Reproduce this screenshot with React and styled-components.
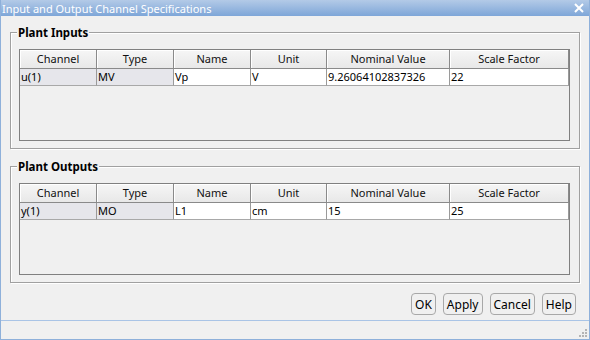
import styled, { createGlobalStyle } from 'styled-components'

const GlobalStyle = createGlobalStyle`
  html, body { margin: 0; padding: 0; background: #f0f0f0; }
  body { font-family: "Noto Sans", "Liberation Sans", sans-serif; font-size: 11px; color: #000; }
`

const columns = ['Channel', 'Type', 'Name', 'Unit', 'Nominal Value', 'Scale Factor']

const groups = [
  { title: 'Plant Inputs', row: ['u(1)', 'MV', 'Vp', 'V', '9.26064102837326', '22'] },
  { title: 'Plant Outputs', row: ['y(1)', 'MO', 'L1', 'cm', '15', '25'] },
]

const buttons = ['OK', 'Apply', 'Cancel', 'Help']

export default function App() {
  return (
    <Window>
      <GlobalStyle />
      <TitleBar>
        <span>Input and Output Channel Specifications</span>
        <svg width="10" height="10" viewBox="0 0 10 10">
          <path d="M1 1 L9 9 M9 1 L1 9" stroke="#fff" strokeWidth="2" />
        </svg>
      </TitleBar>
      <Body>
        {groups.map((g) => (
          <Group key={g.title}>
            <Legend>{g.title}</Legend>
            <Table>
              <Row>
                {columns.map((c) => (
                  <HeadCell key={c}>{c}</HeadCell>
                ))}
              </Row>
              <Row>
                {g.row.map((v, i) => (
                  <Cell key={i} $locked={i < 2}>{v}</Cell>
                ))}
              </Row>
            </Table>
          </Group>
        ))}
        <ButtonBar>
          {buttons.map((b) => (
            <Button key={b}>{b}</Button>
          ))}
        </ButtonBar>
      </Body>
      <StatusBar>
        <svg width="10" height="10" viewBox="0 0 10 10">
          {[[8, 2], [8, 5], [5, 5], [8, 8], [5, 8], [2, 8]].map(([x, y], i) => (
            <rect key={i} x={x - 1} y={y - 1} width="2" height="2" fill="#b4b4b4" />
          ))}
        </svg>
      </StatusBar>
    </Window>
  )
}

const Window = styled.div`
  width: 590px;
  height: 340px;
  box-sizing: border-box;
  border: 1px solid #8eb0da;
  border-top: none;
  display: flex;
  flex-direction: column;
  background: #f0f0f0;
  overflow: hidden;
`

const TitleBar = styled.div`
  height: 16px;
  margin: 0 -1px;
  padding: 0 6px 0 2px;
  display: flex;
  align-items: center;
  justify-content: space-between;
  background: linear-gradient(#b3cae7, #7ea6d8);
  color: #fff;
  font-size: 11px;
  white-space: nowrap;
`

const Body = styled.div`
  flex: 1;
  padding: 16px 9px 0 9px;
  display: flex;
  flex-direction: column;
  gap: 17px;
`

const Group = styled.div`
  position: relative;
  height: 117px;
  box-sizing: border-box;
  border: 1px solid #a0a0a0;
  box-shadow: inset 1px 1px 0 #fff, 1px 1px 0 #fff;
  padding: 16px 9px 0 8px;
`

const Legend = styled.div`
  position: absolute;
  top: -8px;
  left: 6px;
  padding: 0 1px;
  background: #f0f0f0;
  font-weight: 700;
  font-size: 11.5px;
  line-height: 15px;
`

const Table = styled.div`
  height: 92px;
  box-sizing: border-box;
  border: 1px solid #808080;
  background: #f0f0f0;
`

const Row = styled.div`
  display: grid;
  grid-template-columns: 77px 77px 77px 76px 123px 1fr;
`

const HeadCell = styled.div`
  height: 19px;
  box-sizing: border-box;
  border-right: 1px solid #8a8a8a;
  border-bottom: 1px solid #8a8a8a;
  box-shadow: inset 1px 1px 0 #fff;
  background: linear-gradient(#f6f6f6, #e8e8e8);
  text-align: center;
  line-height: 18px;
  color: #111;
`

const Cell = styled.div`
  height: 17px;
  box-sizing: border-box;
  border-right: 1px solid #9a9a9a;
  border-bottom: 1px solid #a8a8a8;
  background: ${({ $locked }) => ($locked ? '#e6e6eb' : '#fff')};
  padding-left: 1px;
  line-height: 16px;
  white-space: nowrap;
  overflow: hidden;
`

const ButtonBar = styled.div`
  margin-top: -7px;
  display: flex;
  justify-content: flex-end;
  gap: 7px;
  padding-right: 4px;
`

const Button = styled.button`
  height: 22px;
  min-width: 24px;
  padding: 0 3px;
  border: 1px solid #a8a8a8;
  border-radius: 4px;
  background: #f0f0f0;
  font-family: inherit;
  font-size: 12px;
  color: #000;
`

const StatusBar = styled.div`
  height: 17px;
  border-top: 1px solid #a9c4e6;
  display: flex;
  justify-content: flex-end;
  align-items: flex-end;
  padding: 0 1px 1px 0;
`
